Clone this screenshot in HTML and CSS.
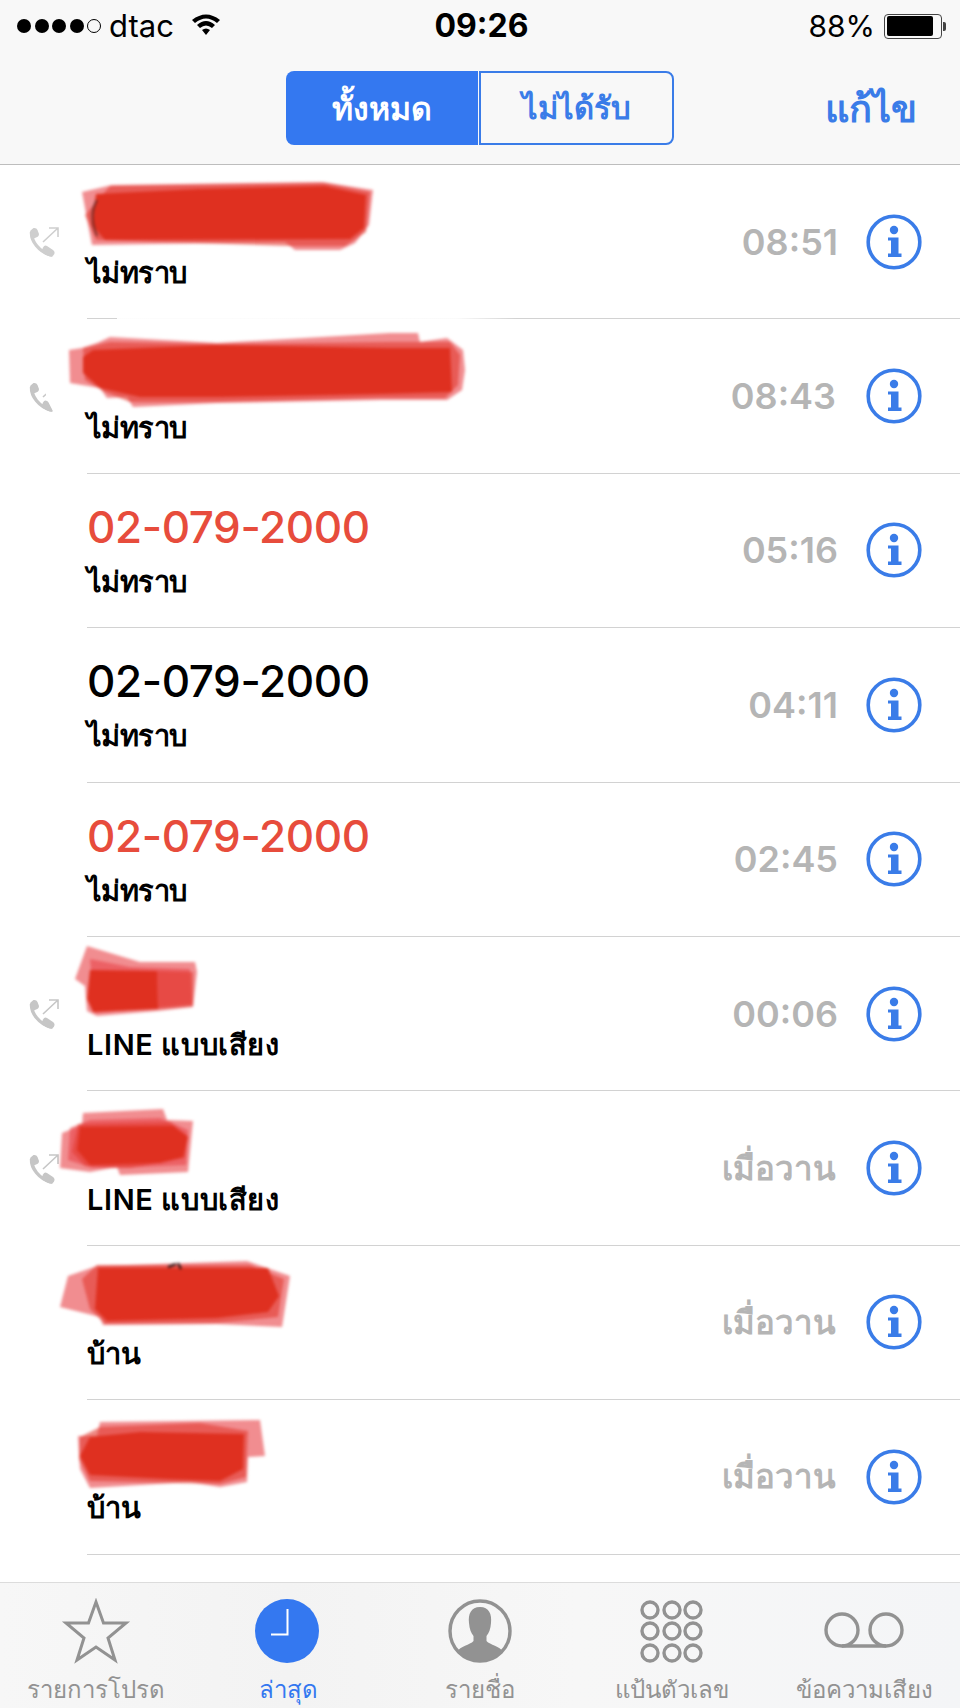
FILE: index.html
```html
<!DOCTYPE html>
<html lang="th">
<head>
<meta charset="utf-8">
<title>ล่าสุด</title>
<link rel="stylesheet" href="styles.css">
</head>
<body>
<svg class="defs" aria-hidden="true">
  <symbol id="phone" viewBox="0 0 32 32">
    <path d="M3.5 6 C3 15 11 26 23 29" fill="none" stroke="#c6c6c6" stroke-width="3.4"/>
    <path d="M2.5 4.5 L5.5 2 Q8.5 1.5 9.5 4 L11 8 Q11 10.5 8 11.5 L5 13 Q2.5 9 2 6 Z" fill="#c6c6c6"/>
    <path d="M15 21.5 Q16.5 18.5 19 20 L25 24 Q27.5 26 26 28.5 L24 31 Q19 30 15.5 27.5 L13.5 25 Z" fill="#c6c6c6"/>
    <path d="M15 16 L30 2 M21 2 H30 V11" fill="none" stroke="#c6c6c6" stroke-width="1.6"/>
  </symbol>
  <symbol id="info" viewBox="0 0 56 56">
    <circle cx="28" cy="28" r="25.8" fill="none" stroke="#3a7ce8" stroke-width="3.6"/>
    <circle cx="28" cy="16" r="4.2" fill="#3a7ce8"/>
    <path d="M22 23.5 H32.5 V39.5 H35.5 V43 H22 V39.5 H25 V26.5 H22 Z" fill="#3a7ce8"/>
  </symbol>
</svg>

<header class="top">
  <div class="status">
    <div class="status-left">
      <span class="signal"><i class="dot"></i><i class="dot"></i><i class="dot"></i><i class="dot"></i><i class="dot dot-empty"></i></span>
      <span class="carrier">dtac</span>
      <svg class="wifi" viewBox="0 0 30 24"><path d="M1 8 Q15 -3 29 8 L26 11 Q15 2 4 11 Z M6 13 Q15 5 24 13 L21 16 Q15 11 9 16 Z M11 18 Q15 15 19 18 L15 23 Z" fill="#000"/></svg>
    </div>
    <div class="clock-time">09:26</div>
    <div class="status-right">
      <span class="percent">88%</span>
      <span class="battery"><span class="battery-fill"></span></span>
      <span class="battery-nub"></span>
    </div>
  </div>
  <nav class="nav">
    <div class="segment">
      <span class="seg seg-on">ทั้งหมด</span>
      <span class="seg seg-off">ไม่ได้รับ</span>
    </div>
    <span class="edit">แก้ไข</span>
  </nav>
</header>

<main class="list">
  <div class="row">
    <div class="lead"><svg class="phone phone-soft"><use href="#phone"/></svg></div>
    <div class="main">
      <div class="text">
        <div class="title">&nbsp;
          <svg class="scribble s1" viewBox="75 178 305 80">
            <polygon class="ink-light" points="82,192 112,185 322,182 373,190 369,225 355,243 340,250 295,250 285,242 92,245"/>
            <polygon class="ink-mid" points="110,186 325,183 370,192 366,232 345,246 290,246 96,240 85,215"/>
            <polygon class="ink-core" points="96,194 200,189 325,186 366,195 364,228 350,239 105,240 92,225"/>
            <path d="M97 200 Q88 215 97 236" fill="none" stroke="#5a2420" stroke-width="1.6"/>
          </svg>
        </div>
        <div class="sub sub-tight">ไม่ทราบ</div>
      </div>
      <span class="time">08:51</span>
      <svg class="info"><use href="#info"/></svg>
      <span class="smear"></span>
    </div>
  </div>

  <div class="row">
    <div class="lead"><svg class="phone phone-cut"><use href="#phone"/></svg></div>
    <div class="main">
      <div class="text">
        <div class="title">&nbsp;
          <svg class="scribble s2" viewBox="60 325 412 90">
            <polygon class="ink-light" points="69,350 82,348 97,343 110,337 217,343 390,333 418,333 420,342 447,338 463,350 465,370 462,390 447,400 380,400 217,403 133,407 127,397 107,398 100,388 70,383"/>
            <polygon class="ink-mid" points="83,348 110,342 217,344 390,342 450,342 460,355 458,385 445,398 380,398 217,402 130,402 105,392 85,380"/>
            <polygon class="ink-core" points="93,350 213,345 387,348 450,348 452,392 380,394 217,397 140,397 100,388 83,373 83,357"/>
          </svg>
        </div>
        <div class="sub sub-tight">ไม่ทราบ</div>
      </div>
      <span class="time time-2">08:43</span>
      <svg class="info"><use href="#info"/></svg>
    </div>
  </div>

  <div class="row">
    <div class="lead"></div>
    <div class="main">
      <div class="text">
        <div class="title title-missed">02-079-2000</div>
        <div class="sub sub-tight">ไม่ทราบ</div>
      </div>
      <span class="time">05:16</span>
      <svg class="info"><use href="#info"/></svg>
    </div>
  </div>

  <div class="row">
    <div class="lead"></div>
    <div class="main">
      <div class="text">
        <div class="title">02-079-2000</div>
        <div class="sub sub-tight">ไม่ทราบ</div>
      </div>
      <span class="time">04:11</span>
      <svg class="info"><use href="#info"/></svg>
    </div>
  </div>

  <div class="row">
    <div class="lead"></div>
    <div class="main">
      <div class="text">
        <div class="title title-missed">02-079-2000</div>
        <div class="sub sub-tight">ไม่ทราบ</div>
      </div>
      <span class="time">02:45</span>
      <svg class="info"><use href="#info"/></svg>
    </div>
  </div>

  <div class="row">
    <div class="lead"><svg class="phone"><use href="#phone"/></svg></div>
    <div class="main">
      <div class="text">
        <div class="title">&nbsp;
          <svg class="scribble s6" viewBox="70 940 135 85">
            <polygon class="ink-light" points="87,947 140,963 195,963 197,973 193,1008 157,1012 97,1017 87,1012 85,987 75,980"/>
            <polygon class="ink-light" points="90,960 130,968 190,970 192,1005 95,1014"/>
            <polygon class="ink-mid" points="157,972 193,973 193,1007 158,1010"/>
            <polygon class="ink-core" points="90,971 157,972 158,1010 93,1013 87,1000"/>
          </svg>
        </div>
        <div class="sub sub-line">LINE แบบเสียง</div>
      </div>
      <span class="time">00:06</span>
      <svg class="info"><use href="#info"/></svg>
    </div>
  </div>

  <div class="row">
    <div class="lead"><svg class="phone"><use href="#phone"/></svg></div>
    <div class="main">
      <div class="text">
        <div class="title">&nbsp;
          <svg class="scribble s7" viewBox="55 1102 145 80">
            <polygon class="ink-light" points="83,1113 163,1109 167,1120 193,1121 188,1172 120,1175 117,1167 90,1172 60,1168 62,1133 82,1125"/>
            <polygon class="ink-light" points="70,1128 90,1120 160,1118 188,1130 186,1165 120,1168 92,1168 68,1160"/>
            <polygon class="ink-mid" points="78,1124 170,1122 188,1136 185,1158 130,1168 85,1166 72,1152"/>
            <polygon class="ink-core" points="80,1127 173,1126 188,1137 183,1157 160,1163 90,1165 77,1150"/>
          </svg>
        </div>
        <div class="sub sub-line">LINE แบบเสียง</div>
      </div>
      <span class="time time-thai">เมื่อวาน</span>
      <svg class="info"><use href="#info"/></svg>
    </div>
  </div>

  <div class="row">
    <div class="lead"></div>
    <div class="main">
      <div class="text">
        <div class="title">&nbsp;
          <svg class="scribble s8" viewBox="55 1255 245 80">
            <polygon class="ink-light" points="68,1277 97,1267 247,1262 290,1277 282,1328 217,1325 103,1326 100,1318 60,1308"/>
            <polygon class="ink-mid" points="82,1280 97,1266 250,1266 284,1280 278,1318 217,1324 105,1325 90,1310"/>
            <polygon class="ink-core" points="98,1269 268,1269 279,1297 268,1313 217,1319 107,1322 95,1310"/>
            <path d="M168 1268 L176 1265 M178 1264 L181 1270" fill="none" stroke="#1a1010" stroke-width="2"/>
          </svg>
        </div>
        <div class="sub">บ้าน</div>
      </div>
      <span class="time time-thai">เมื่อวาน</span>
      <svg class="info"><use href="#info"/></svg>
    </div>
  </div>

  <div class="row">
    <div class="lead"></div>
    <div class="main">
      <div class="text">
        <div class="title">&nbsp;
          <svg class="scribble s9" viewBox="72 1415 200 80">
            <polygon class="ink-light" points="100,1423 260,1421 265,1457 248,1458 247,1483 220,1488 190,1483 90,1489 80,1470 78,1437 97,1437"/>
            <polygon class="ink-mid" points="100,1428 200,1424 248,1432 246,1478 220,1485 90,1482 79,1460 80,1438"/>
            <polygon class="ink-core" points="90,1438 140,1433 244,1435 243,1470 220,1482 167,1480 90,1476 80,1457"/>
          </svg>
        </div>
        <div class="sub">บ้าน</div>
      </div>
      <span class="time time-thai">เมื่อวาน</span>
      <svg class="info"><use href="#info"/></svg>
    </div>
  </div>
</main>

<footer class="tabs">
  <div class="tab">
    <svg class="tab-icon" viewBox="0 0 80 66"><polygon points="40,4 47.5,25 70,25 52,40 59,62 40,49 21,62 28,40 10,25 32.5,25" fill="none" stroke="#929292" stroke-width="3"/></svg>
    <span class="tab-label">รายการโปรด</span>
  </div>
  <div class="tab tab-on">
    <svg class="tab-icon" viewBox="0 0 80 66"><circle cx="39" cy="33" r="32" fill="#3478f0"/><path d="M39.5 11 V36.5 H23" fill="none" stroke="#fff" stroke-width="2"/></svg>
    <span class="tab-label">ล่าสุด</span>
  </div>
  <div class="tab">
    <svg class="tab-icon" viewBox="0 0 80 66"><circle cx="40" cy="33" r="30" fill="none" stroke="#929292" stroke-width="3.4"/><path d="M40 9 C31 9 28 16 29 25 C29.5 31 31 35 33.5 38 V43 C30 47 20 48 17 54 Q27 63 40 63 Q53 63 63 54 C60 48 50 47 46.5 43 V38 C49 35 50.5 31 51 25 C52 16 49 9 40 9 Z" fill="#929292"/></svg>
    <span class="tab-label">รายชื่อ</span>
  </div>
  <div class="tab">
    <svg class="tab-icon" viewBox="0 0 80 66"><g fill="none" stroke="#929292" stroke-width="3.4"><circle cx="18" cy="12" r="8"/><circle cx="40" cy="12" r="8"/><circle cx="61" cy="12" r="8"/><circle cx="18" cy="33" r="8"/><circle cx="40" cy="33" r="8"/><circle cx="61" cy="33" r="8"/><circle cx="18" cy="55" r="8"/><circle cx="40" cy="55" r="8"/><circle cx="61" cy="55" r="8"/></g></svg>
    <span class="tab-label">แป้นตัวเลข</span>
  </div>
  <div class="tab">
    <svg class="tab-icon" viewBox="0 0 80 66"><g fill="none" stroke="#929292" stroke-width="3.4"><circle cx="18" cy="32" r="16"/><circle cx="62" cy="32" r="16"/><path d="M18 48 H62"/></g></svg>
    <span class="tab-label">ข้อความเสียง</span>
  </div>
</footer>
</body>
</html>
```

FILE: styles.css
```css
* { box-sizing: border-box; }

html, body {
  margin: 0;
  height: 1708px;
  overflow: hidden;
}

body {
  display: flex;
  flex-direction: column;
  background: #fff;
  color: #000;
  font-family: Inter, "Noto Sans", "DejaVu Sans", sans-serif;
}

.defs { display: none; }

/* Top bars */
.top {
  background: #f8f8f8;
  border-bottom: 1px solid #bdbdbd;
}

.status {
  height: 52px;
  padding: 0 14px 0 17px;
  display: grid;
  grid-template-columns: 1fr auto 1fr;
  align-items: center;
}

.status-left { display: flex; align-items: center; }

.signal { display: flex; gap: 3.5px; margin-right: 8px; }

.dot {
  width: 14px;
  height: 14px;
  border-radius: 50%;
  background: #000;
}

.dot-empty {
  background: transparent;
  border: 1px solid #000;
}

.carrier { font-size: 31px; line-height: 36px; }

.wifi { width: 30px; height: 24px; margin-left: 17px; margin-top: -4px; }

.clock-time { font-size: 32px; font-weight: 700; line-height: 36px; }

.status-right { display: flex; align-items: center; justify-content: flex-end; }

.percent { font-size: 30px; line-height: 36px; margin-right: 9px; }

.battery {
  width: 58px;
  height: 25px;
  border: 1.5px solid #444;
  border-radius: 4px;
  padding: 1.5px;
  display: flex;
}

.battery-fill {
  width: 88%;
  background: #000;
  border-radius: 2px;
}

.battery-nub {
  width: 3px;
  height: 9px;
  margin-left: 1px;
  background: #444;
  border-radius: 0 2px 2px 0;
}

.nav {
  height: 112px;
  padding: 0 43px 0 0;
  display: grid;
  grid-template-columns: 1fr auto 1fr;
  align-items: center;
}

.segment {
  grid-column: 2;
  display: flex;
  width: 388px;
  height: 74px;
  font-size: 32px;
  font-weight: 600;
  margin-right: -43px;
}

.seg {
  display: flex;
  align-items: center;
  justify-content: center;
}

.seg-on {
  width: 192px;
  background: #3478f0;
  color: #fff;
  border-radius: 8px 0 0 8px;
}

.seg-off {
  flex: 1;
  margin-left: 1px;
  border: 2px solid #3a7ce8;
  border-radius: 0 8px 8px 0;
  color: #3a7ce8;
  font-size: 31px;
}

.edit {
  grid-column: 3;
  justify-self: end;
  color: #3a7ce8;
  font-size: 38px;
  font-weight: 600;
}

/* Call list */
.list { display: flex; flex-direction: column; }

.row {
  height: 154.4px;
  display: flex;
}

.lead {
  width: 87px;
  flex: none;
  display: flex;
  align-items: center;
  padding-left: 28px;
}

.phone { width: 32px; height: 32px; }

.phone-soft { opacity: .85; }

.phone-cut { clip-path: polygon(0 0, 45% 0, 60% 60%, 80% 100%, 0 100%); }

.main {
  position: relative;
  flex: 1;
  display: flex;
  align-items: center;
  padding-right: 38px;
  border-bottom: 1px solid #d2d2d2;
}

.text { flex: 1; }

.title {
  position: relative;
  font-size: 44px;
  font-weight: 500;
  letter-spacing: -.4px;
  line-height: 62px;
}

.title-missed { color: #e74c3c; }

.sub {
  font-size: 29px;
  font-weight: 600;
  line-height: 47px;
}

.sub-tight { letter-spacing: -.6px; }

.sub-line { letter-spacing: .6px; }

.time {
  color: #b5b5b5;
  font-size: 36px;
  font-weight: 600;
}

.time-2 { margin-right: 2px; }

.time-thai { font-size: 33px; margin-right: 2px; }

.info {
  width: 56px;
  height: 56px;
  margin-left: 28px;
  flex: none;
}

.smear {
  position: absolute;
  left: 30px;
  bottom: -2px;
  width: 400px;
  height: 4px;
  background: linear-gradient(90deg, rgba(255,255,255,.95), rgba(255,255,255,.9) 85%, rgba(255,255,255,0));
}

/* Redaction scribbles */
.scribble {
  position: absolute;
  filter: blur(1.6px);
}

.ink-light { fill: #e8474c; fill-opacity: .62; }
.ink-mid { fill: #e23a30; fill-opacity: .6; }
.ink-core { fill: #df3020; }

.s1 { left: -12px; top: -9px; width: 305px; height: 80px; }
.s2 { left: -27px; top: -17px; width: 412px; height: 90px; }
.s6 { left: -17px; top: -20px; width: 135px; height: 85px; }
.s7 { left: -32px; top: -12px; width: 145px; height: 80px; }
.s8 { left: -32px; top: -14px; width: 245px; height: 80px; }
.s9 { left: -15px; top: -8px; width: 200px; height: 80px; }

/* Tab bar */
.tabs {
  margin-top: auto;
  height: 126px;
  padding-top: 15px;
  display: grid;
  grid-template-columns: repeat(5, 1fr);
  background: linear-gradient(90deg, #f7f7f7, #f3f3f3 30%, #f7f7f7 60%, #f4f5f7);
  border-top: 1px solid #dcdcdc;
}

.tab {
  display: flex;
  flex-direction: column;
  align-items: center;
  color: #929292;
}

.tab-icon { width: 80px; height: 66px; flex: none; }

.tab-label {
  font-size: 24px;
  line-height: 34px;
  margin-top: 9px;
  white-space: nowrap;
}

.tab-on { color: #3478f0; font-weight: 500; }
```
